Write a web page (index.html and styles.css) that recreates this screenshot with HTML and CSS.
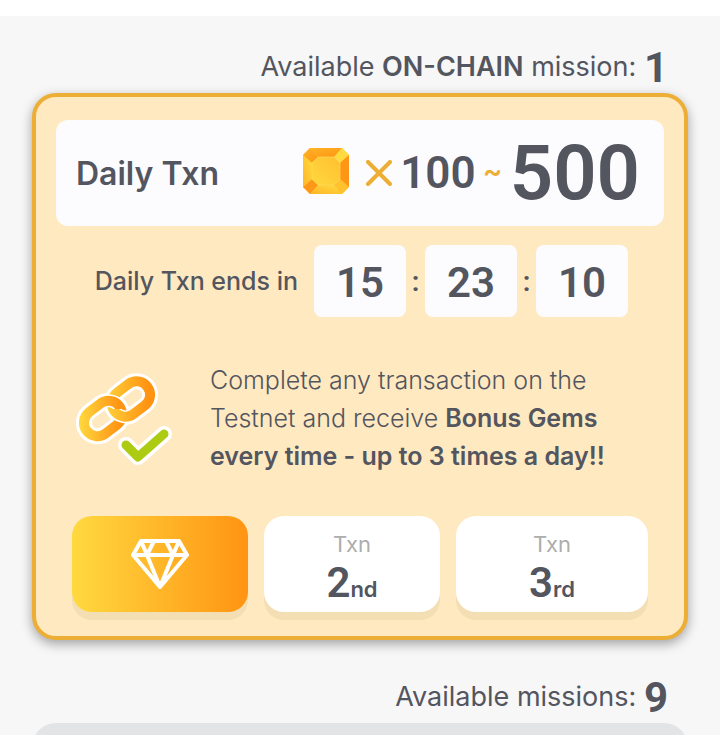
FILE: index.html
```html
<!DOCTYPE html>
<html lang="en">
<head>
  <meta charset="UTF-8">
  <meta name="viewport" content="width=device-width, initial-scale=1.0">
  <title>Daily missions</title>
  <link rel="stylesheet" href="styles.css">
</head>
<body>
  <main class="missions">
    <h2 class="available">Available <strong>ON-CHAIN</strong> mission: <span class="count">1</span></h2>

    <section class="card">
      <div class="reward">
        <h3 class="reward-title">Daily Txn</h3>
        <div class="reward-amount">
          <svg class="gem" viewBox="0 0 48 48" aria-hidden="true">
            <defs>
              <linearGradient id="gemDark" x1="0" y1="0" x2="1" y2="1">
                <stop offset="0" stop-color="#ffb326"/>
                <stop offset="1" stop-color="#ff9514"/>
              </linearGradient>
              <linearGradient id="gemLight" x1="0" y1="1" x2="1" y2="0">
                <stop offset="0" stop-color="#ffb52b"/>
                <stop offset="1" stop-color="#ffdb3c"/>
              </linearGradient>
              <linearGradient id="gemCore" x1="0" y1="1" x2="1" y2="0">
                <stop offset="0" stop-color="#ffd83e"/>
                <stop offset="1" stop-color="#ffc02f"/>
              </linearGradient>
            </defs>
            <path d="M8 1H40L47 8V40L40 47H8L1 40V8Z" fill="#ffc52f"/>
            <path d="M8 1 16 10 10 16 1 8Z" fill="url(#gemDark)"/>
            <path d="M8 1H40L32 10H16Z" fill="url(#gemDark)"/>
            <path d="M40 1 47 8 38 16 32 10Z" fill="#ffdb40"/>
            <path d="M47 8V40L38 32V16Z" fill="#ff9714"/>
            <path d="M47 40 40 47 32 38 38 32Z" fill="#ffc12e"/>
            <path d="M40 47H8L16 38H32Z" fill="url(#gemLight)"/>
            <path d="M8 47 1 40 10 32 16 38Z" fill="#ff9818"/>
            <path d="M1 40V8L10 16V32Z" fill="url(#gemLight)"/>
            <path d="M16 10H32L38 16V32L32 38H16L10 32V16Z" fill="url(#gemCore)" stroke="#ffdc62" stroke-width=".6"/>
          </svg>
          <svg class="times" viewBox="0 0 26 26" aria-hidden="true">
            <path d="M2 2 24 24M24 2 2 24"/>
          </svg>
          <span class="min">100</span>
          <span class="tilde">~</span>
          <span class="max">500</span>
        </div>
      </div>

      <div class="timer">
        <span class="timer-label">Daily Txn ends in</span>
        <div class="clock">
          <span class="digits">15</span>
          <span class="colon">:</span>
          <span class="digits">23</span>
          <span class="colon">:</span>
          <span class="digits">10</span>
        </div>
      </div>

      <div class="info">
        <svg class="chain" viewBox="0 0 98 96" aria-hidden="true">
          <defs>
            <linearGradient id="linkA" x1="0" y1="0" x2="1" y2=".5">
              <stop offset="0" stop-color="#ffd03a"/>
              <stop offset="1" stop-color="#ff9413"/>
            </linearGradient>
            <linearGradient id="linkB" x1="0" y1="0" x2="1" y2=".5">
              <stop offset="0" stop-color="#ffd93f"/>
              <stop offset="1" stop-color="#ff9413"/>
            </linearGradient>
            <clipPath id="lowerHalf">
              <path d="M20 39H90V70H20Z"/>
            </clipPath>
          </defs>
          <g fill="none">
            <g stroke="#fff" stroke-width="16">
              <rect x="34.500" y="15.500" width="41" height="27" rx="13.500" transform="rotate(-37 55 29)"/>
              <rect x="6.500" y="35" width="41" height="27" rx="13.500" transform="rotate(-37 27 48.500)"/>
            </g>
            <rect x="34.500" y="15.500" width="41" height="27" rx="13.500" transform="rotate(-37 55 29)" stroke="url(#linkA)" stroke-width="10"/>
            <rect x="6.500" y="35" width="41" height="27" rx="13.500" transform="rotate(-37 27 48.500)" stroke="#fff" stroke-width="13"/>
            <rect x="6.500" y="35" width="41" height="27" rx="13.500" transform="rotate(-37 27 48.500)" stroke="url(#linkB)" stroke-width="10"/>
            <!-- lower strand of the upper link passes back over the other one -->
            <g clip-path="url(#lowerHalf)">
              <rect x="34.500" y="15.500" width="41" height="27" rx="13.500" transform="rotate(-37 55 29)" stroke="#fff" stroke-width="13"/>
              <rect x="34.500" y="15.500" width="41" height="27" rx="13.500" transform="rotate(-37 55 29)" stroke="url(#linkA)" stroke-width="10"/>
            </g>
            <g stroke-linecap="round" stroke-linejoin="round">
              <path d="M50 75 62 87 88 64" stroke="#fff" stroke-width="16"/>
              <path d="M50 75 62 87 88 64" stroke="#aecb13" stroke-width="9"/>
            </g>
          </g>
        </svg>
        <p class="info-text">Complete any transaction on the Testnet and receive <strong>Bonus Gems every time - up to 3 times a day!!</strong></p>
      </div>

      <div class="steps">
        <button class="step step-active" type="button" aria-label="Claim gems">
          <svg class="diamond" viewBox="0 0 60 50" aria-hidden="true">
            <path d="M11 2H49L57 16 30 48 3 16ZM3 16H57M11 2 17 16 30 48 43 16 49 2M24 2 17 16M36 2 43 16"/>
          </svg>
        </button>
        <button class="step" type="button">
          <span class="step-label">Txn</span>
          <span class="step-number">2<small>nd</small></span>
        </button>
        <button class="step" type="button">
          <span class="step-label">Txn</span>
          <span class="step-number">3<small>rd</small></span>
        </button>
      </div>
    </section>

    <h2 class="available">Available missions: <span class="count">9</span></h2>
    <section class="next">
      <div class="next-card"></div>
    </section>
  </main>
</body>
</html>
```

FILE: styles.css
```css
* {
  box-sizing: border-box;
}
body {
  margin: 0;
  padding-top: 16px;
  background: #fff;
  color: #53555f;
  font-family: Inter, sans-serif;
}
.missions {
  padding: 24px 32px 0;
  background: #f7f7f7;
}
h2, h3, p {
  margin: 0;
}
.available {
  padding-right: 20px;
  text-align: right;
  font-size: 27px;
  font-weight: 400;
  line-height: 53px;
}
.available strong {
  font-weight: 600;
}
.count {
  font-family: Roboto, sans-serif;
  font-size: 42px;
  font-weight: 700;
  line-height: 48px;
  vertical-align: -6px;
}
.card {
  margin-bottom: 30px;
  padding: 23px 20px 24px;
  border: 4px solid #ecae35;
  border-radius: 24px;
  background: #ffe9c0;
  box-shadow: 0 4px 12px rgba(0, 0, 0, 0.35);
}
.reward {
  display: flex;
  align-items: center;
  justify-content: space-between;
  height: 106px;
  padding: 0 24px 4px 20px;
  border-radius: 12px;
  background: #fcfcff;
}
.reward-title {
  padding-top: 4px;
  font-size: 32px;
  font-weight: 600;
}
.reward-amount {
  display: flex;
  align-items: center;
  font-family: Roboto, sans-serif;
  font-weight: 600;
}
.gem {
  width: 48px;
  height: 48px;
  margin-right: 16px;
}
.times {
  width: 26px;
  height: 26px;
  margin: 4px 8px 0 0;
  fill: none;
  stroke: #ecae35;
  stroke-width: 4;
  stroke-linecap: round;
}
.min, .max {
  padding-top: 4px;
}
.min {
  font-size: 44px;
}
.tilde {
  margin: 0 8px;
  color: #ecae35;
  font-size: 28px;
  font-weight: 700;
}
.max {
  font-size: 76px;
}
.timer {
  display: flex;
  align-items: center;
  justify-content: flex-end;
  gap: 16px;
  padding: 19px 36px 0 0;
}
.timer-label {
  font-size: 25px;
  font-weight: 500;
}
.clock {
  display: flex;
  align-items: center;
  font-family: Roboto, sans-serif;
  font-weight: 600;
}
.digits {
  width: 92px;
  height: 72px;
  border-radius: 8px;
  background: #fcfcff;
  text-align: center;
  font-size: 42px;
  line-height: 76px;
}
.colon {
  width: 19px;
  text-align: center;
  font-size: 28px;
}
.info {
  display: flex;
  align-items: center;
  gap: 36px;
  padding: 44px 24px 0 20px;
}
.chain {
  flex: none;
  width: 98px;
  height: 96px;
}
.info-text {
  font-size: 25px;
  font-weight: 300;
  line-height: 38px;
}
.info-text strong {
  font-weight: 600;
}
.steps {
  display: grid;
  grid-template-columns: 11fr 11fr 12fr;
  gap: 16px;
  padding: 41px 16px 0;
}
.step {
  display: flex;
  flex-direction: column;
  align-items: center;
  justify-content: center;
  height: 96px;
  padding: 0;
  border: none;
  border-radius: 20px;
  background: #fff;
  box-shadow: 0 8px 0 #f4deb4;
  color: inherit;
  font-family: inherit;
  cursor: pointer;
}
.step-active {
  background: linear-gradient(90deg, #ffd93f, #ff9413);
}
.diamond {
  width: 60px;
  height: 50px;
  fill: none;
  stroke: #fff;
  stroke-width: 4;
  stroke-linejoin: round;
}
.step-label {
  padding-top: 12px;
  color: #adadad;
  font-size: 22px;
  line-height: 32px;
}
.step-number {
  font-family: Roboto, sans-serif;
  font-size: 42px;
  font-weight: 600;
  line-height: 46px;
}
.step-number small {
  font-family: Inter, sans-serif;
  font-size: 22px;
  font-weight: 600;
}
/* only the top edge of the next card is visible */
.next {
  height: 12px;
  overflow: hidden;
}
.next-card {
  height: 96px;
  border-radius: 24px;
  background: #e3e4e6;
}
```
